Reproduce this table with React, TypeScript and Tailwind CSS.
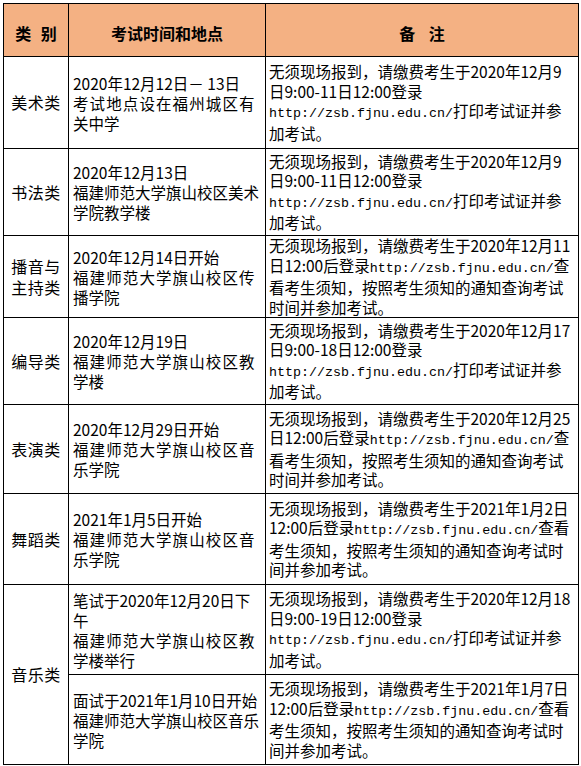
import React from 'react';

type Row = {
  h: string;
  cat?: string[];
  catSpan?: number;
  time: string[];
  note: string[];
};

const URL = 'http://zsb.fjnu.edu.cn/';

const rows: Row[] = [
  {
    h: 'h-[92px]',
    cat: ['美术类'],
    time: ['2020年12月12日－ 13日', '~考试地点设在福州城区有', '关中学'],
    note: [
      '无须现场报到，请缴费考生于2020年12月9',
      '日9:00-11日12:00登录',
      'http://zsb.fjnu.edu.cn/打印考试证并参',
      '加考试。',
    ],
  },
  {
    h: 'h-[87px]',
    cat: ['书法类'],
    time: ['2020年12月13日', '福建师范大学旗山校区美术', '学院教学楼'],
    note: [
      '无须现场报到，请缴费考生于2020年12月9',
      '日9:00-11日12:00登录',
      'http://zsb.fjnu.edu.cn/打印考试证并参',
      '加考试。',
    ],
  },
  {
    h: 'h-[80px]',
    cat: ['播音与', '主持类'],
    time: ['2020年12月14日开始', '~福建师范大学旗山校区传', '播学院'],
    note: [
      '无须现场报到，请缴费考生于2020年12月11',
      '日12:00后登录http://zsb.fjnu.edu.cn/查',
      '看考生须知，按照考生须知的通知查询考试',
      '时间并参加考试。',
    ],
  },
  {
    h: 'h-[87px]',
    cat: ['编导类'],
    time: ['2020年12月19日', '~福建师范大学旗山校区教', '学楼'],
    note: [
      '无须现场报到，请缴费考生于2020年12月17',
      '日9:00-18日12:00登录',
      'http://zsb.fjnu.edu.cn/打印考试证并参',
      '加考试。',
    ],
  },
  {
    h: 'h-[89px]',
    cat: ['表演类'],
    time: ['2020年12月29日开始', '~福建师范大学旗山校区音', '乐学院'],
    note: [
      '无须现场报到，请缴费考生于2020年12月25',
      '日12:00后登录http://zsb.fjnu.edu.cn/查',
      '看考生须知，按照考生须知的通知查询考试',
      '时间并参加考试。',
    ],
  },
  {
    h: 'h-[91px]',
    cat: ['舞蹈类'],
    time: ['2021年1月5日开始', '~福建师范大学旗山校区音', '乐学院'],
    note: [
      '无须现场报到，请缴费考生于2021年1月2日',
      '12:00后登录http://zsb.fjnu.edu.cn/查看',
      '考生须知，按照考生须知的通知查询考试时',
      '间并参加考试。',
    ],
  },
  {
    h: 'h-[90px]',
    cat: ['音乐类'],
    catSpan: 2,
    time: ['笔试于2020年12月20日下', '午', '~福建师范大学旗山校区教', '学楼举行'],
    note: [
      '无须现场报到，请缴费考生于2020年12月18',
      '日9:00-19日12:00登录',
      'http://zsb.fjnu.edu.cn/打印考试证并参',
      '加考试。',
    ],
  },
  {
    h: 'h-[90px]',
    time: ['面试于2021年1月10日开始', '福建师范大学旗山校区音乐', '学院'],
    note: [
      '无须现场报到，请缴费考生于2021年1月7日',
      '12:00后登录http://zsb.fjnu.edu.cn/查看',
      '考生须知，按照考生须知的通知查询考试时',
      '间并参加考试。',
    ],
  },
];

// lines starting with ~ are spread out a little, as in the sheet
function TimeLine({ text }: { text: string }) {
  const wide = text.startsWith('~');
  return (
    <div className={`whitespace-nowrap ${wide ? 'tracking-[1.1px]' : ''}`}>
      {wide ? text.slice(1) : text}
    </div>
  );
}

// the url is set half-width, like the rest of the latin text in the sheet
function NoteLine({ text }: { text: string }) {
  const i = text.indexOf(URL);
  if (i < 0) return <div className="whitespace-nowrap">{text}</div>;
  return (
    <div className="whitespace-nowrap">
      {text.slice(0, i)}
      <span className="font-['Liberation_Mono',monospace] text-[13.33px]">{URL}</span>
      {text.slice(i + URL.length)}
    </div>
  );
}

export default function App() {
  return (
    <div className="bg-white w-[581px] h-[766px] pt-[3px] pl-[3px] font-['Noto_Sans_CJK_SC','Liberation_Sans',sans-serif] text-black">
      <table className="table-fixed border-collapse w-[575px]">
        <colgroup>
          <col className="w-[65px]" />
          <col className="w-[197px]" />
          <col className="w-[313px]" />
        </colgroup>
        <thead>
          <tr className="h-[53px] bg-[#f4b183] text-[16px]">
            <th className="border border-black pt-[5px] font-bold text-center tracking-[3px] pl-[3px]">类 别</th>
            <th className="border border-black pt-[5px] font-bold text-center">考试时间和地点</th>
            <th className="border border-black pt-[5px] font-bold text-center tracking-[5px] pl-[5px]">备 注</th>
          </tr>
        </thead>
        <tbody>
          {rows.map((r, idx) => (
            <tr key={idx} className={r.h}>
              {r.cat && (
                <td
                  rowSpan={r.catSpan || 1}
                  className="border border-black text-center align-middle text-[16px] leading-[21px] tracking-[0.5px]"
                >
                  {r.cat.map((c) => (
                    <div key={c}>{c}</div>
                  ))}
                </td>
              )}
              <td className="border border-black align-middle pl-[4px] text-[15.5px] leading-[20px]">
                {r.time.map((t, j) => (
                  <TimeLine key={j} text={t} />
                ))}
              </td>
              <td className="border border-black align-middle pl-[3px] text-[15.5px] leading-[19.5px]">
                {r.note.map((n, j) => (
                  <NoteLine key={j} text={n} />
                ))}
              </td>
            </tr>
          ))}
        </tbody>
      </table>
    </div>
  );
}
